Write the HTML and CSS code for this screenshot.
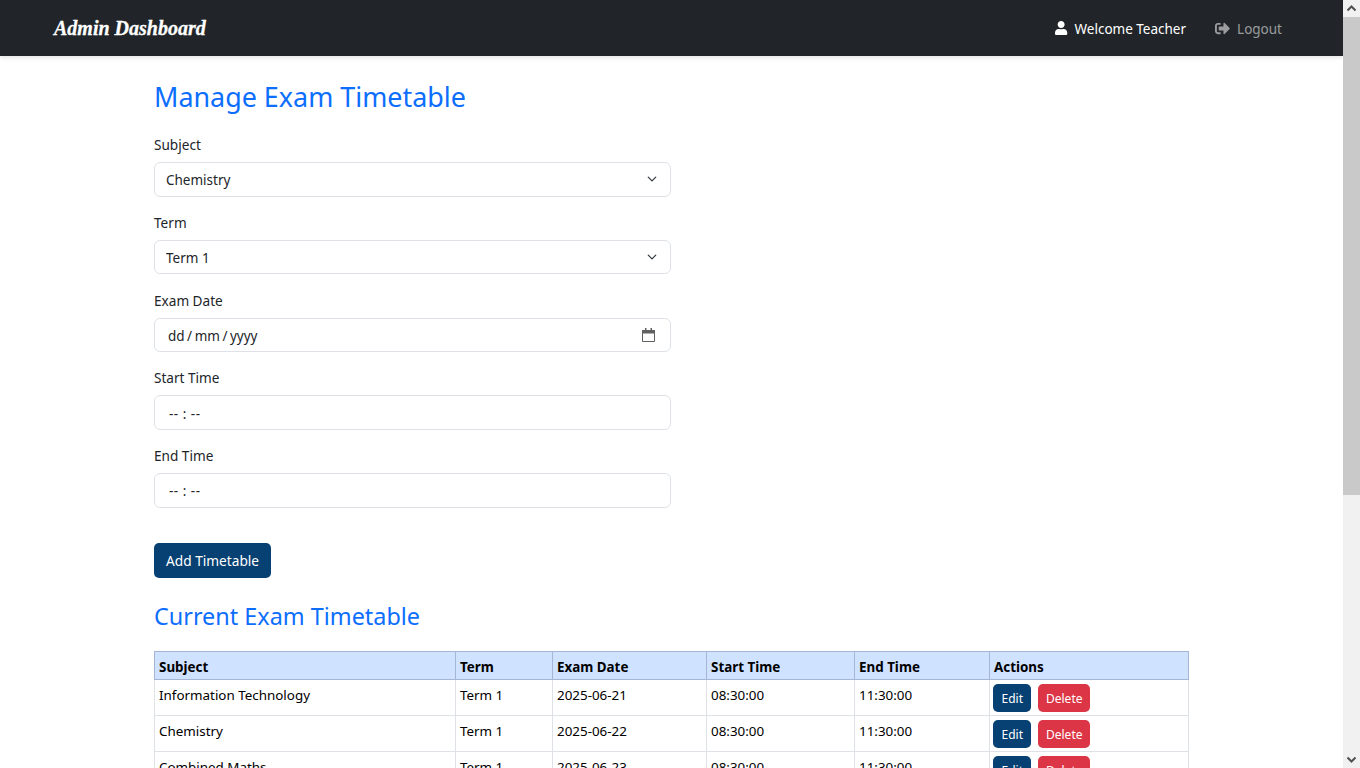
FILE: index.html
```html
<!DOCTYPE html>
<html>
<head>
  <meta charset="utf-8">
  <meta name="viewport" content="width=device-width">
  <title>Manage Exam Timetable</title>
  <link rel="stylesheet" href="styles.css">
</head>
<body>
  <div class="page">
    <nav class="navbar">
      <span class="brand">Admin Dashboard</span>
      <div class="nav-right">
        <span class="nav-item welcome">
          <svg class="icon icon-user" viewBox="0 0 448 512"><path d="M224 256c70.7 0 128-57.3 128-128S294.7 0 224 0 96 57.3 96 128s57.3 128 128 128zm89.6 32h-16.7c-22.2 10.2-46.9 16-72.9 16s-50.6-5.8-72.9-16h-16.7C60.2 288 0 348.2 0 422.4V464c0 26.5 21.5 48 48 48h352c26.5 0 48-21.5 48-48v-41.6c0-74.2-60.2-134.4-134.4-134.4z"/></svg>
          Welcome Teacher
        </span>
        <a class="nav-item logout" href="#">
          <svg class="icon icon-logout" viewBox="0 0 512 512"><path d="M497 273L329 441c-15 15-41 4.5-41-17v-96H152c-13.3 0-24-10.7-24-24v-96c0-13.3 10.7-24 24-24h136V88c0-21.4 25.9-32 41-17l168 168c9.3 9.4 9.3 24.6 0 34zM192 436v-40c0-6.6-5.4-12-12-12H96c-17.7 0-32-14.3-32-32V160c0-17.7 14.3-32 32-32h84c6.6 0 12-5.4 12-12V76c0-6.6-5.4-12-12-12H96c-53 0-96 43-96 96v192c0 53 43 96 96 96h84c6.6 0 12-5.4 12-12z"/></svg>
          Logout
        </a>
      </div>
    </nav>

    <main class="container">
      <h2 class="title">Manage Exam Timetable</h2>
      <form class="form">
        <div class="field">
          <label>Subject</label>
          <select class="control select">
            <option>Chemistry</option>
            <option>Information Technology</option>
            <option>Combined Maths</option>
          </select>
        </div>
        <div class="field">
          <label>Term</label>
          <select class="control select">
            <option>Term 1</option>
            <option>Term 2</option>
            <option>Term 3</option>
          </select>
        </div>
        <div class="field">
          <label>Exam Date</label>
          <input class="control blank date" type="text" placeholder="dd / mm / yyyy">
        </div>
        <div class="field">
          <label>Start Time</label>
          <input class="control blank time" type="text" placeholder="-- : --">
        </div>
        <div class="field">
          <label>End Time</label>
          <input class="control blank time" type="text" placeholder="-- : --">
        </div>
        <button class="btn btn-blue btn-add" type="button">Add Timetable</button>
      </form>

      <h2 class="title title-table">Current Exam Timetable</h2>
      <table class="table">
        <colgroup>
          <col class="c-subject"><col class="c-term"><col class="c-date"><col class="c-start"><col class="c-end"><col class="c-actions">
        </colgroup>
        <thead>
          <tr><th>Subject</th><th>Term</th><th>Exam Date</th><th>Start Time</th><th>End Time</th><th>Actions</th></tr>
        </thead>
        <tbody>
          <tr><td>Information Technology</td><td>Term 1</td><td>2025-06-21</td><td>08:30:00</td><td>11:30:00</td><td><a class="btn btn-blue btn-sm">Edit</a><a class="btn btn-red btn-sm">Delete</a></td></tr>
          <tr><td>Chemistry</td><td>Term 1</td><td>2025-06-22</td><td>08:30:00</td><td>11:30:00</td><td><a class="btn btn-blue btn-sm">Edit</a><a class="btn btn-red btn-sm">Delete</a></td></tr>
          <tr><td>Combined Maths</td><td>Term 1</td><td>2025-06-23</td><td>08:30:00</td><td>11:30:00</td><td><a class="btn btn-blue btn-sm">Edit</a><a class="btn btn-red btn-sm">Delete</a></td></tr>
        </tbody>
      </table>
    </main>
  </div>

  <div class="scrollbar">
    <svg class="sb-arrow" viewBox="0 0 17 17"><path d="M4.500 10.500l4-4 4 4" fill="none" stroke="#505050" stroke-width="2"/></svg>
    <div class="sb-track"><div class="sb-thumb"></div></div>
    <svg class="sb-arrow" viewBox="0 0 17 17"><path d="M4.500 6.500l4 4 4-4" fill="none" stroke="#505050" stroke-width="2"/></svg>
  </div>
</body>
</html>
```
FILE: styles.css
```css
*{
  box-sizing: border-box;
}
html, body{
  height: 100%;
  overflow: hidden;
}
body{
  display: flex;
  margin: 0;
  font-family: "Noto Sans", "Open Sans", sans-serif;
  font-size: 13.6px;
  color: #212529;
  background: #fff;
}
.page{
  flex: 1;
  min-width: 0;
  height: 100%;
  overflow-y: auto;
}
.scrollbar{
  display: flex;
  flex-direction: column;
  flex: none;
  width: 17px;
  background: #f1f1f1;
}
.sb-arrow{
  flex: none;
  display: block;
  width: 17px;
  height: 17px;
}
.sb-track{
  flex: 1;
}
.sb-thumb{
  height: 478px;
  background: #c9c9c9;
}
.navbar{
  display: flex;
  align-items: center;
  justify-content: space-between;
  height: 56px;
  padding: 0 61px 0 54px;
  background: #212529;
  box-shadow: 0 2px 4px rgba(0,0,0,.1);
}
.brand{
  font-family: "Liberation Serif", serif;
  font-style: italic;
  font-weight: bold;
  font-size: 20px;
  color: #fff;
  -webkit-text-stroke: .3px #fff;
}
.nav-right{
  display: flex;
  align-items: center;
  gap: 29px;
}
.nav-item{
  display: flex;
  align-items: center;
  gap: 7px;
  padding-top: 2px;
  font-size: 13.5px;
  text-decoration: none;
}
.welcome{
  color: #fff;
}
.logout{
  color: rgba(255,255,255,.55);
}
.icon{
  height: 14px;
  margin-bottom: 2px;
  fill: currentColor;
}
.icon-logout{
  height: 15px;
}
.container{
  width: 1035px;
  margin: 0 auto;
  padding-top: 21px;
  padding-bottom: 40px;
}
.title{
  margin: 0 0 17px;
  font-size: 26.9px;
  font-weight: 400;
  line-height: 40px;
  color: #0d6efd;
}
.title-table{
  margin-top: 18px;
  margin-bottom: 15px;
  font-size: 23.4px;
}
.form{
  width: 517px;
}
.field{
  margin-bottom: 15.25px;
}
.field label{
  display: block;
  margin-bottom: 7px;
  line-height: 21px;
}
.control{
  display: block;
  width: 100%;
  height: 34.5px;
  padding: 0 11px;
  border: 1px solid #dee2e6;
  border-radius: 6px;
  background: #fff;
  font-family: inherit;
  font-size: 13.5px;
  color: #212529;
}
.select{
  appearance: none;
  padding-top: 2px;
  background-image: url("data:image/svg+xml,%3csvg xmlns='http://www.w3.org/2000/svg' viewBox='0 0 16 16'%3e%3cpath fill='none' stroke='%23343a40' stroke-linecap='round' stroke-linejoin='round' stroke-width='2' d='m2 5 6 6 6-6'/%3e%3c/svg%3e");
  background-repeat: no-repeat;
  background-position: right 12px center;
  background-size: 12px 10px;
}
.blank{
  padding: 2px 14px 0 13px;
}
.blank::placeholder{
  color: #212529;
  opacity: 1;
}
.date{
  word-spacing: -1px;
  background-image: url("data:image/svg+xml,%3csvg xmlns='http://www.w3.org/2000/svg' viewBox='0 0 13 14' width='13' height='14'%3e%3cpath fill='%23606060' d='M3 0h1.500v2H3zM8.500 0H10v2H8.500zM0 2h13v3.500H0z'/%3e%3cpath fill='none' stroke='%23606060' d='M.5 3h12v10.500H.5z'/%3e%3c/svg%3e");
  background-repeat: no-repeat;
  background-position: right 15px center;
}
.time{
  padding-left: 14px;
  letter-spacing: .5px;
}
.btn{
  display: inline-block;
  border: 0;
  border-radius: 5px;
  color: #fff;
  font-family: inherit;
  text-decoration: none;
}
.btn-blue{
  background: #074173;
}
.btn-red{
  background: #dc3545;
}
.btn-add{
  height: 35px;
  margin-top: 20.25px;
  padding: 0 12px;
  font-size: 13.7px;
}
.table{
  width: 1034px;
  table-layout: fixed;
  border-collapse: collapse;
}
.c-subject{ width: 301px; }
.c-term{ width: 97px; }
.c-date{ width: 154px; }
.c-start{ width: 148px; }
.c-end{ width: 135px; }
.c-actions{ width: 199px; }
.table th{
  height: 28px;
  padding: 5px 4px 3px;
  border: 1px solid #a6b5d6;
  background: #cfe2ff;
  color: #000;
  text-align: left;
  vertical-align: middle;
  font-size: 13.4px;
}
.table td{
  height: 36px;
  padding: 3.5px 4px;
  border: 1px solid #dee2e6;
  color: #000;
  font-size: 13.4px;
  vertical-align: top;
  line-height: 22px;
}
.btn-sm{
  height: 28px;
  margin-left: -1px;
  font-size: 12px;
  line-height: 30px;
  vertical-align: top;
}
.btn-blue.btn-sm{
  padding: 0 8.5px;
}
.btn-red.btn-sm{
  margin-left: 7px;
  padding: 0 7.5px;
}
```
